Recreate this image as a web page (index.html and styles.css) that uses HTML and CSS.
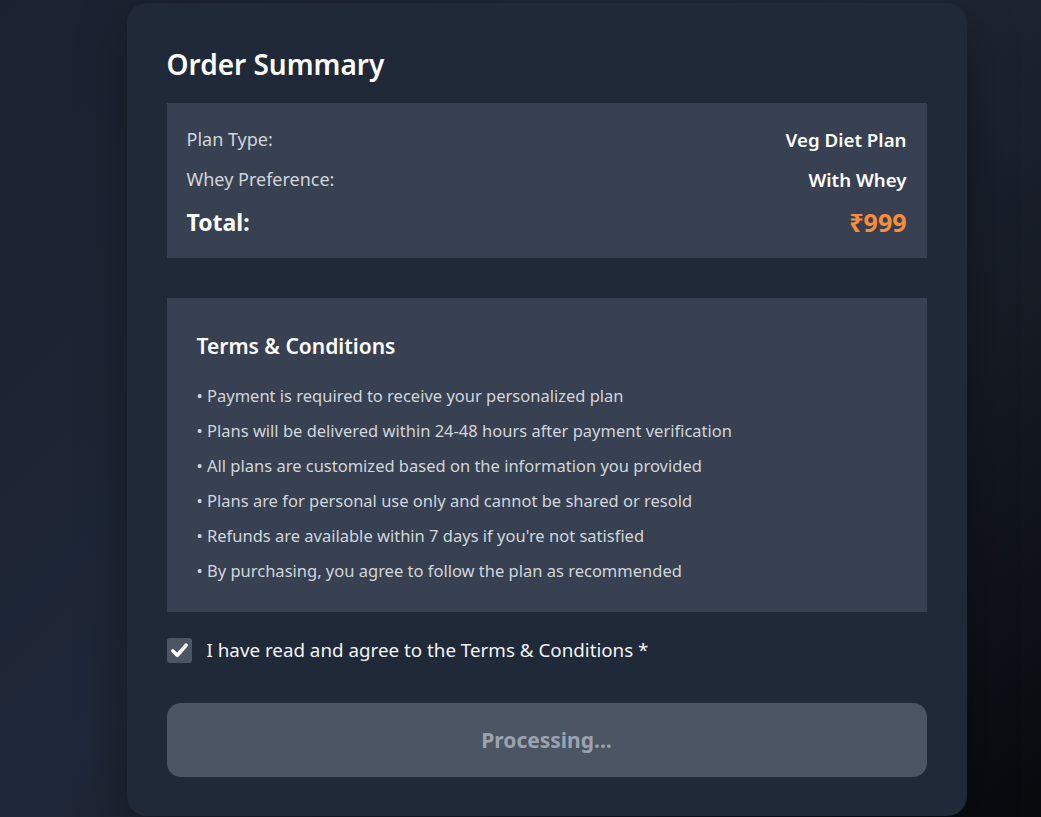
FILE: index.html
```html
<!DOCTYPE html>
<html lang="en">
<head>
<meta charset="utf-8">
<title>Order Summary</title>
<link rel="stylesheet" href="styles.css">
</head>
<body>
<main class="page">
  <section class="card">
    <h2 class="title">Order Summary</h2>
    <div class="summary">
      <div class="row">
        <span class="label">Plan Type:</span>
        <span class="value">Veg Diet Plan</span>
      </div>
      <div class="row">
        <span class="label">Whey Preference:</span>
        <span class="value">With Whey</span>
      </div>
      <div class="row total">
        <span class="total-label">Total:</span>
        <span class="price">₹999</span>
      </div>
    </div>
    <div class="terms">
      <h3 class="terms-title">Terms &amp; Conditions</h3>
      <ul class="terms-list">
        <li>• Payment is required to receive your personalized plan</li>
        <li>• Plans will be delivered within 24-48 hours after payment verification</li>
        <li>• All plans are customized based on the information you provided</li>
        <li>• Plans are for personal use only and cannot be shared or resold</li>
        <li>• Refunds are available within 7 days if you're not satisfied</li>
        <li>• By purchasing, you agree to follow the plan as recommended</li>
      </ul>
    </div>
    <label class="agree">
      <span class="checkbox">
        <svg viewBox="0 0 24 24" width="21" height="21"><path d="M4.5 12.5 L9.5 17.5 L19.5 6" fill="none" stroke="#fff" stroke-width="4.2" stroke-linecap="round" stroke-linejoin="round"/></svg>
      </span>
      <span class="agree-text">I have read and agree to the Terms &amp; Conditions *</span>
    </label>
    <button class="submit" type="button" disabled>Processing...</button>
  </section>
</main>
</body>
</html>
```

FILE: styles.css
```css
html, body {
  margin: 0;
  padding: 0;
}
body {
  min-height: 817px;
  background: linear-gradient(135deg, #1a2130 0%, #1f2838 45%, #171c26 70%, #07090d 100%);
  font-family: "Noto Sans", "Open Sans", sans-serif;
  color: #fff;
}
.page {
  display: flex;
  justify-content: center;
  padding: 3px 0 0 52px;
}
.card {
  width: 840px;
  box-sizing: border-box;
  background: #1f2937;
  border-radius: 20px;
  padding: 43px 40px 39px;
  box-shadow: 0 20px 50px rgba(0, 0, 0, 0.35);
}
.title {
  margin: 0 0 21px;
  font-size: 28px;
  line-height: 36px;
  font-weight: 600;
  color: #fff;
}
.summary {
  background: #374151;
  padding: 20px;
  display: flex;
  flex-direction: column;
  gap: 8px;
}
.row {
  display: flex;
  justify-content: space-between;
  align-items: center;
  height: 32px;
}
.label {
  font-size: 18px;
  color: #d1d5db;
}
.value {
  font-size: 18.7px;
  font-weight: 600;
  color: #fff;
}
.total {
  margin-top: 3px;
}
.total-label {
  font-size: 23px;
  font-weight: 700;
  color: #fff;
}
.price {
  font-size: 25px;
  font-weight: 700;
  color: #fb8c3a;
}
.terms {
  margin-top: 40px;
  background: #374151;
  padding: 30px 30px 24px;
}
.terms-title {
  margin: 0 0 14px;
  font-size: 21px;
  line-height: 36px;
  font-weight: 600;
  color: #fff;
}
.terms-list {
  list-style: none;
  margin: 0;
  padding: 0;
}
.terms-list li {
  font-size: 16.5px;
  line-height: 35px;
  color: #d1d5db;
}
.agree {
  margin-top: 25px;
  display: flex;
  align-items: center;
  gap: 15px;
  line-height: 26px;
}
.checkbox {
  width: 25px;
  height: 25px;
  border-radius: 3px;
  background: #4b5563;
  display: flex;
  align-items: center;
  justify-content: center;
}
.agree-text {
  font-size: 18.8px;
  color: #f3f4f6;
}
.submit {
  display: block;
  width: 100%;
  margin-top: 40px;
  height: 74px;
  border: none;
  border-radius: 14px;
  background: #4b5563;
  color: #9ca3af;
  font-family: inherit;
  font-size: 21px;
  font-weight: 700;
}
```
